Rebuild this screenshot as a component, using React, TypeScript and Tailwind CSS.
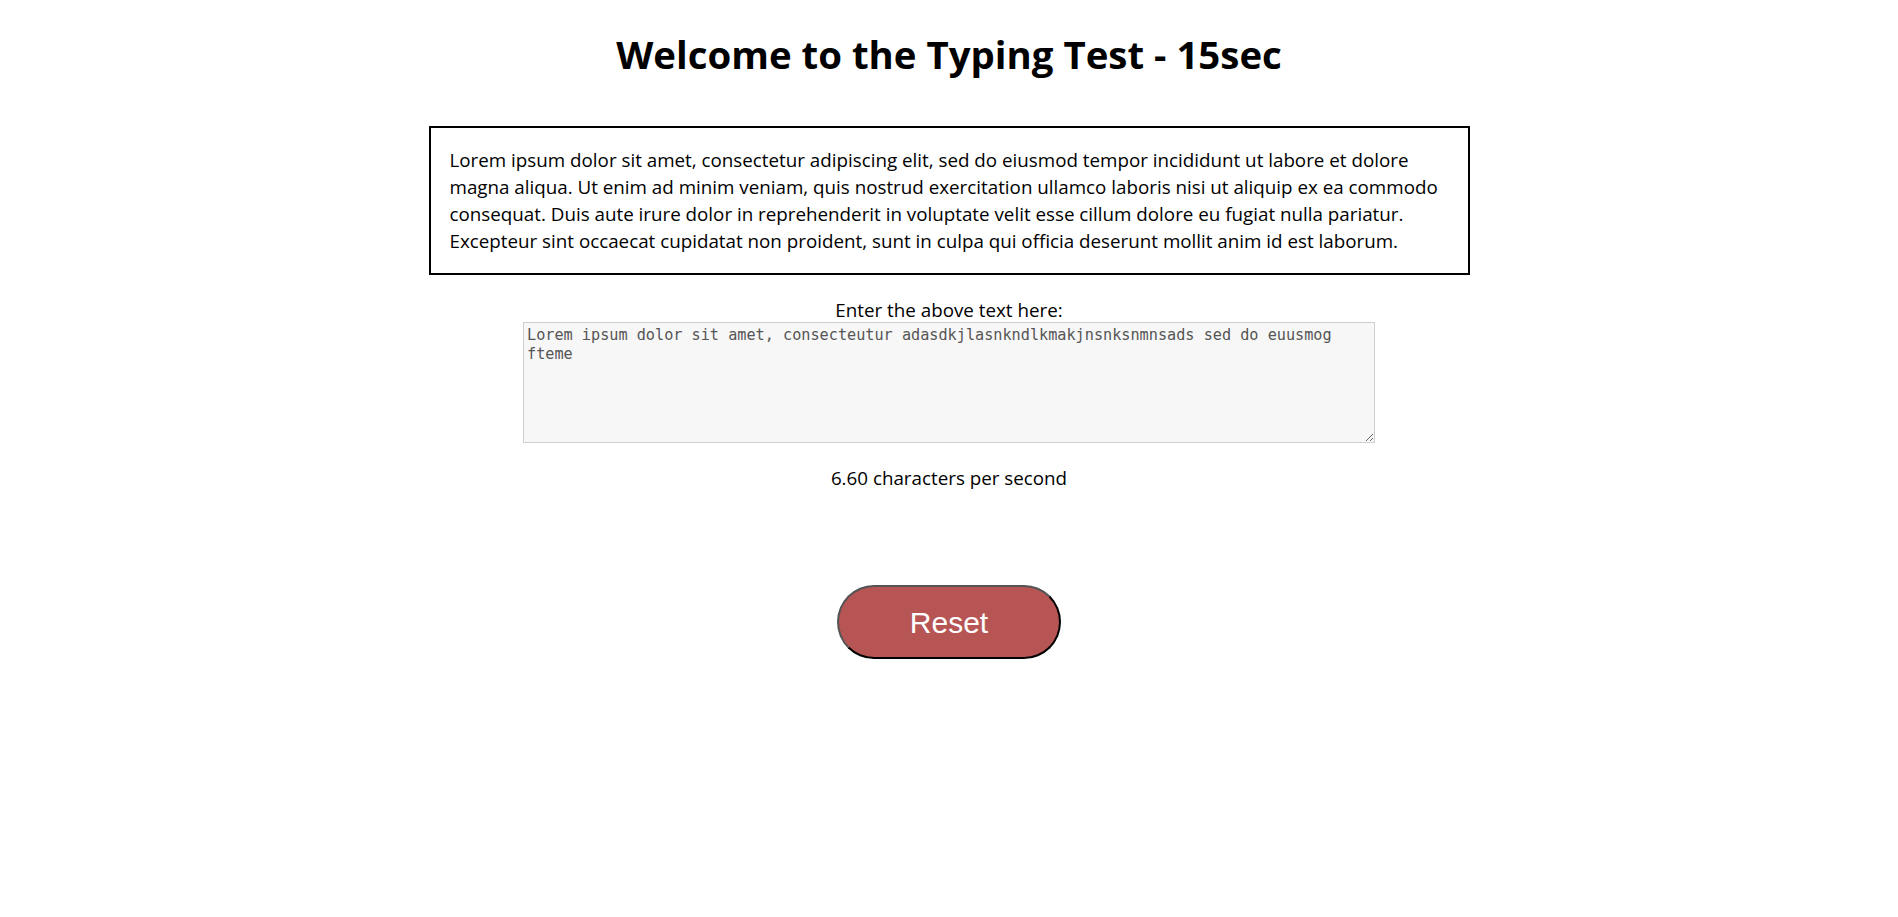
import React, { useState } from "react";

const PASSAGE =
	"Lorem ipsum dolor sit amet, consectetur adipiscing elit, sed do eiusmod tempor incididunt ut labore et dolore magna aliqua. Ut enim ad minim veniam, quis nostrud exercitation ullamco laboris nisi ut aliquip ex ea commodo consequat. Duis aute irure dolor in reprehenderit in voluptate velit esse cillum dolore eu fugiat nulla pariatur. Excepteur sint occaecat cupidatat non proident, sunt in culpa qui officia deserunt mollit anim id est laborum.";

const TYPED =
	"Lorem ipsum dolor sit amet, consecteutur adasdkjlasnkndlkmakjnsnksnmnsads sed do euusmog fteme";

const App: React.FC = () => {
	const [typed, setTyped] = useState(TYPED);

	return (
		<div className="min-h-screen bg-white flex flex-col items-center text-black font-['Open_Sans',sans-serif]">
			{/* TITLE */}
			<h1 className="mt-[33px] text-[38.4px] leading-[43px] font-bold">
				Welcome to the Typing Test - 15sec
			</h1>

			{/* PASSAGE */}
			<div className="mt-[50px] w-[1041px] border-2 border-black pl-[19px] pr-[16px] pt-[19px] pb-[18px] text-[18.8px] leading-[27px]">
				{PASSAGE}
			</div>

			{/* INPUT */}
			<label htmlFor="typed" className="mt-[23px] text-[18.8px] leading-[24px]">
				Enter the above text here:
			</label>
			<textarea
				id="typed"
				value={typed}
				onChange={(e) => setTyped(e.target.value)}
				className="w-[852px] h-[121px] border border-[#cfcfcf] bg-[#f7f7f7] px-[3px] pt-[3px] pb-[2px] text-[15.2px] leading-[19px] text-[#555] font-['DejaVu_Sans_Mono',monospace] outline-none"
			/>

			{/* RESULT */}
			<p className="mt-[23px] text-[18.8px] leading-[24px]">6.60 characters per second</p>

			{/* RESET */}
			<button
				onClick={() => setTyped("")}
				className="mt-[95px] w-[224px] h-[74px] rounded-full border-2 border-black [border-style:outset] bg-[#b75555] text-white text-[30px] font-['Liberation_Sans',Arial,sans-serif]"
			>
				Reset
			</button>
		</div>
	);
};

export default App;
